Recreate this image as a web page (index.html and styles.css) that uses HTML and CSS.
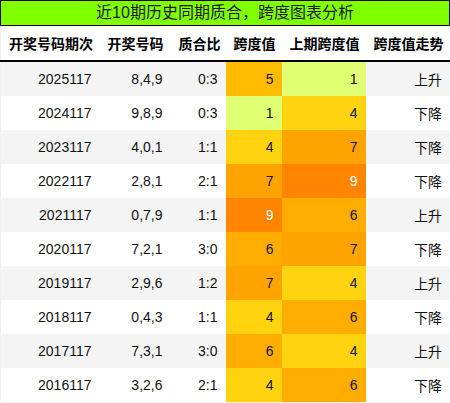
FILE: index.html
```html
<!DOCTYPE html>
<html lang="zh-CN">
<head>
    <meta charset="UTF-8">
    <meta name="viewport" content="width=device-width, initial-scale=1.0">
    <title>近10期历史同期质合，跨度图表分析</title>
    <link rel="stylesheet" href="styles.css">
</head>
<body>
    <div class="chart">
        <div class="chart-title">近10期历史同期质合，跨度图表分析</div>
        <table class="span-table">
            <colgroup>
                <col class="c-issue">
                <col class="c-nums">
                <col class="c-ratio">
                <col class="c-span">
                <col class="c-prev">
                <col class="c-trend">
            </colgroup>
            <thead>
                <tr>
                    <th>开奖号码期次</th>
                    <th>开奖号码</th>
                    <th>质合比</th>
                    <th>跨度值</th>
                    <th>上期跨度值</th>
                    <th>跨度值走势</th>
                </tr>
            </thead>
            <tbody id="rows"></tbody>
        </table>
    </div>

    <script>
        const data = [
            ['2025117', '8,4,9', '0:3', 5, 1, '上升'],
            ['2024117', '9,8,9', '0:3', 1, 4, '下降'],
            ['2023117', '4,0,1', '1:1', 4, 7, '下降'],
            ['2022117', '2,8,1', '2:1', 7, 9, '下降'],
            ['2021117', '0,7,9', '1:1', 9, 6, '上升'],
            ['2020117', '7,2,1', '3:0', 6, 7, '下降'],
            ['2019117', '2,9,6', '1:2', 7, 4, '上升'],
            ['2018117', '0,4,3', '1:1', 4, 6, '下降'],
            ['2017117', '7,3,1', '3:0', 6, 4, '上升'],
            ['2016117', '3,2,6', '2:1', 4, 6, '下降']
        ];

        function spanClass(v) {
            return 'heat heat-' + v;
        }

        const tbody = document.getElementById('rows');
        data.forEach(function (row) {
            const tr = document.createElement('tr');
            tr.innerHTML =
                '<td>' + row[0] + '</td>' +
                '<td>' + row[1] + '</td>' +
                '<td>' + row[2] + '</td>' +
                '<td class="' + spanClass(row[3]) + '">' + row[3] + '</td>' +
                '<td class="' + spanClass(row[4]) + '">' + row[4] + '</td>' +
                '<td>' + row[5] + '</td>';
            tbody.appendChild(tr);
        });
    </script>
</body>
</html>
```

FILE: styles.css
```css
body {
    margin: 0;
    font-family: "Liberation Sans", "Noto Sans CJK SC", sans-serif;
    color: #111;
    background-color: white;
}
.chart {
    width: 450px;
}
.chart-title {
    height: 24px;
    line-height: 24px;
    border: 1px solid #000;
    background-color: #7fff00;
    text-align: center;
    font-size: 16px;
    color: #1a1a1a;
}
.span-table {
    width: 450px;
    border-collapse: collapse;
    table-layout: fixed;
    font-size: 14px;
    border: 1px solid #f0f0f0;
    border-top: none;
}
.c-issue { width: 99px; }
.c-nums { width: 71px; }
.c-ratio { width: 55px; }
.c-span { width: 56px; }
.c-prev { width: 84px; }
.c-trend { width: 85px; }
.span-table th {
    height: 34px;
    padding: 0 8px;
    font-weight: bold;
    text-align: right;
    white-space: nowrap;
    border-bottom: 2px solid #000;
    color: #000;
}
.span-table th:first-child {
    text-align: left;
}
.span-table td {
    height: 34px;
    padding: 0 8px;
    text-align: right;
    white-space: nowrap;
}
.span-table tbody tr:nth-child(odd) {
    background-color: #f4f4f4;
}
.heat-1 { background-color: #e1ff73; }
.heat-4 { background-color: #ffd30f; }
.heat-5 { background-color: #ffbb00; }
.heat-6 { background-color: #ffad00; }
.heat-7 { background-color: #ffa300; }
.heat-9 { background-color: #ff8400; color: white; }
```
